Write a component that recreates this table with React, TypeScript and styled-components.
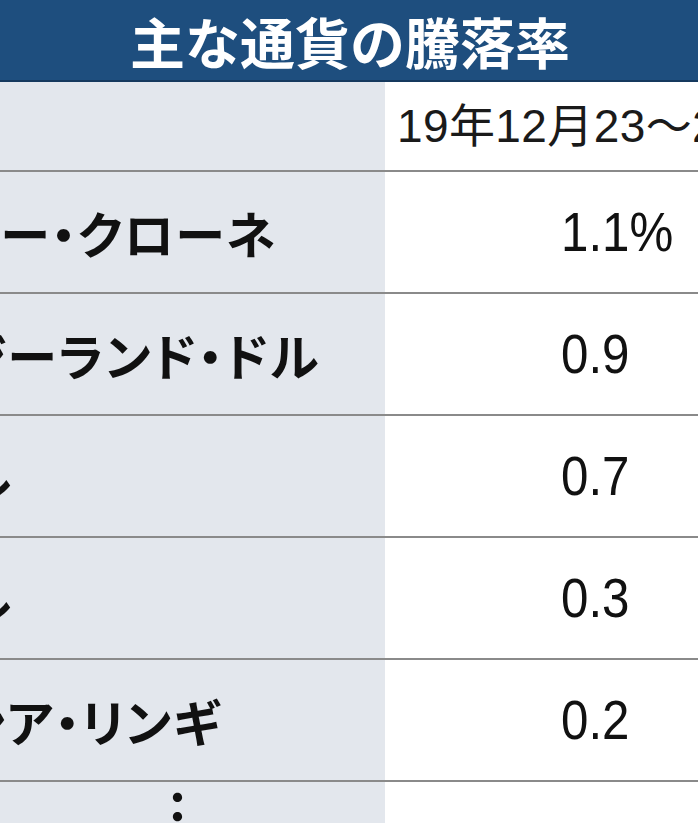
import React from 'react';
import styled, { createGlobalStyle } from 'styled-components';

const GlobalStyle = createGlobalStyle`
  html, body { margin: 0; padding: 0; overflow: hidden; background: #ffffff; }
  body { width: 698px; height: 823px; }
`;

const Table = styled.div`
  width: 1100px;
  margin-left: -200px;
  font-family: "Noto Sans CJK JP", sans-serif;
  color: #111;
`;

const TitleBar = styled.header`
  height: 80px;
  background: #1e4e7e;
  border-bottom: 2px solid #15395e;
  display: flex;
  align-items: center;
  justify-content: center;
  color: #ffffff;
  font-weight: 700;
  font-size: 55px;
  line-height: 1;
`;

const Row = styled.div<{ $h: number; $line?: boolean }>`
  display: grid;
  grid-template-columns: 585px 1fr;
  height: ${(p) => p.$h}px;
  border-bottom: ${(p) => (p.$line === false ? 'none' : '2px solid #8a8a8a')};
`;

const NameCell = styled.div`
  background: #e3e7ed;
  display: flex;
  align-items: center;
  padding-left: 14px;
  font-size: 50px;
  font-weight: 600;
  letter-spacing: 1.5px;
  font-feature-settings: "palt";
  white-space: nowrap;
  line-height: 1;
`;

const MoreCell = styled(NameCell)`
  align-items: flex-start;
  padding-left: 349px;
  padding-top: 3px;
  font-size: 57px;
  font-weight: 700;
  letter-spacing: 0;
`;

const ValueCell = styled.div<{ $pad: number }>`
  background: #ffffff;
  display: flex;
  align-items: center;
  padding-left: ${(p) => p.$pad}px;
  white-space: nowrap;
  line-height: 1;
`;

const DateText = styled.span`
  font-family: "Liberation Sans", "Noto Sans CJK JP", sans-serif;
  font-size: 46px;
  font-weight: 400;
  letter-spacing: 0.4px;
  color: #1a1a1a;
`;

const Num = styled.span`
  display: inline-block;
  font-family: "Liberation Sans", Arial, sans-serif;
  font-size: 56px;
  font-weight: 400;
  transform: scaleX(0.88);
  transform-origin: left center;
  color: #111;
`;

const rows = [
  { name: 'ノルウェー・クローネ', value: '1.1%' },
  { name: 'ニュージーランド・ドル', value: '0.9' },
  { name: '香港ドル', value: '0.7' },
  { name: '台湾ドル', value: '0.3' },
  { name: 'マレーシア・リンギ', value: '0.2' },
];

export default function App() {
  return (
    <>
      <GlobalStyle />
      <Table>
        <TitleBar>主な通貨の騰落率</TitleBar>
        <Row $h={88}>
          <NameCell />
          <ValueCell $pad={12}>
            <DateText>19年12月23～27日</DateText>
          </ValueCell>
        </Row>
        {rows.map((r) => (
          <Row key={r.name} $h={120}>
            <NameCell>{r.name}</NameCell>
            <ValueCell $pad={176}>
              <Num>{r.value}</Num>
            </ValueCell>
          </Row>
        ))}
        <Row $h={60} $line={false}>
          <MoreCell>︙</MoreCell>
          <ValueCell $pad={176} />
        </Row>
      </Table>
    </>
  );
}
